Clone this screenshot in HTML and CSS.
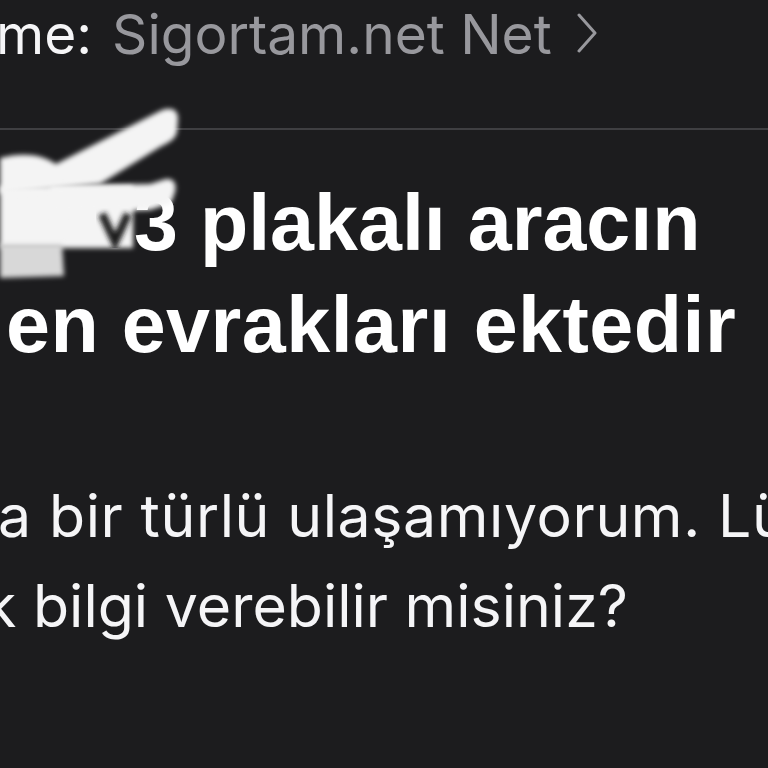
FILE: index.html
```html
<!DOCTYPE html>
<html lang="tr">
<head>
    <meta charset="UTF-8">
    <meta name="viewport" content="width=device-width, initial-scale=1.0">
    <title>Mail</title>
    <link rel="stylesheet" href="styles.css">
</head>
<body>
    <div class="mail">
        <div class="header">
            <span class="label">me:</span>
            <span class="sender">Sigortam.net Net</span>
            <svg class="chevron" width="22" height="40" viewBox="0 0 22 40">
                <polyline points="3,2 19,20 3,38" fill="none" stroke="#98989d" stroke-width="3" stroke-linecap="round" stroke-linejoin="round"/>
            </svg>
        </div>

        <div class="divider"></div>

        <div class="subject">
            <div class="subject-line first">3 plakalı aracın</div>
            <div class="subject-line second">en evrakları ektedir</div>
        </div>

        <div class="message">
            <p class="line first">a bir türlü ulaşamıyorum. Lütfen</p>
            <p class="line second">k bilgi verebilir misiniz?</p>
        </div>
    </div>

    <!-- redaction scribble over the plate number -->
    <svg class="scribble" width="200" height="300" viewBox="0 0 200 300">
        <defs>
            <filter id="soft" x="-20%" y="-20%" width="140%" height="140%">
                <feGaussianBlur stdDeviation="2.4"/>
            </filter>
        </defs>
        <rect x="0" y="186" width="133" height="62" fill="#f4f4f4" filter="url(#soft)"/>
        <path d="M0,158 C22,152 42,154 56,164 L158,112 C168,106 178,108 178,118 L177,132 C175,140 168,143 160,147 L100,184 L0,194 Z" fill="#f4f4f4" filter="url(#soft)"/>
        <path d="M50,186 L150,184 L166,179 C174,178 177,184 175,192 L171,203 L150,210 L50,214 Z" fill="#f4f4f4" filter="url(#soft)"/>
        <path d="M0,244 L62,244 L64,276 L0,278 Z" fill="#d8d8d8" filter="url(#soft)"/>
        <polyline points="102,214 115,242 128,214" fill="none" stroke="#1c1c1e" stroke-width="8" filter="url(#soft)"/>
    </svg>
</body>
</html>
```

FILE: styles.css
```css
body {
    margin: 0;
    background-color: #1c1c1e;
    color: #f5f5f7;
    overflow: hidden;
    width: 768px;
    height: 768px;
    position: relative;
}
.mail {
    display: flex;
    flex-direction: column;
}
.header {
    display: flex;
    align-items: center;
    gap: 20px;
    padding-top: 1px;
    margin-left: -4px;
    font-family: Inter, "Liberation Sans", sans-serif;
    font-size: 55px;
    line-height: 66px;
    white-space: nowrap;
}
.label {
    color: #f5f5f7;
}
.sender {
    color: #98989d;
}
.chevron {
    margin-left: 4px;
    margin-top: -2px;
}
.divider {
    height: 2px;
    background-color: #3f3f42;
    margin-top: 61px;
}
.subject {
    margin-top: 42px;
    font-family: "Liberation Sans", Arial, sans-serif;
    font-weight: bold;
    font-size: 79px;
    line-height: 102px;
    color: #ffffff;
    white-space: nowrap;
}
.subject-line.first {
    padding-left: 134px;
}
.subject-line.second {
    margin-left: 6px;
    letter-spacing: 0.5px;
}
.message {
    margin-top: 95px;
    font-family: Inter, "Liberation Sans", sans-serif;
    font-size: 59px;
    line-height: 90px;
    white-space: nowrap;
}
.line {
    margin: 0;
}
.line.first {
    margin-left: -2px;
    letter-spacing: 0.6px;
}
.line.second {
    margin-left: -16px;
}
.scribble {
    position: absolute;
    top: 0;
    left: 0;
}
```
